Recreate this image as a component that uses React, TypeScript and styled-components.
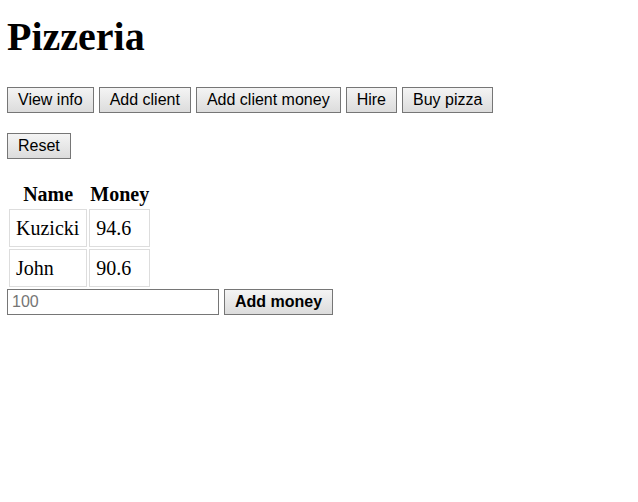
import React from "react";
import styled, { createGlobalStyle } from "styled-components";

const GlobalStyle = createGlobalStyle`
  html, body {
    margin: 0;
    padding: 0;
    background: #ffffff;
    color: #000000;
    font-family: "Liberation Serif", "Times New Roman", serif;
    font-size: 20px;
  }
`;

const Page = styled.div`
  padding: 15px 7px 0;
  display: flex;
  flex-direction: column;
  align-items: flex-start;
`;

const Title = styled.h1`
  margin: 0;
  font-family: "Liberation Serif", "Times New Roman", serif;
  font-size: 40px;
  line-height: 44px;
  font-weight: bold;
`;

const ButtonRow = styled.div<{ $top: number }>`
  display: flex;
  gap: 5px;
  margin-top: ${(p) => p.$top}px;
`;

const Button = styled.button<{ $bold?: boolean }>`
  box-sizing: border-box;
  height: 26px;
  margin: 0;
  padding: 0 10px;
  font-family: "Liberation Sans", Arial, sans-serif;
  font-size: 16px;
  line-height: 18px;
  font-weight: ${(p) => (p.$bold ? "bold" : "normal")};
  color: #000000;
  background: linear-gradient(to bottom, #f4f4f4, #dcdcdc);
  border: 1px solid #767676;
  border-radius: 0;
  cursor: pointer;
`;

const Table = styled.table`
  margin-top: 21px;
  border-collapse: separate;
  border-spacing: 2px;
  font-size: 20px;
`;

const HeadCell = styled.th`
  padding: 1px 1px;
  line-height: 23px;
  font-weight: bold;
  text-align: center;
`;

const Cell = styled.td`
  padding: 6px 7px 6px 6px;
  line-height: 24px;
  border: 1px solid #dddddd;
  text-align: left;
`;

const Form = styled.div`
  display: flex;
  gap: 5px;
`;

const MoneyInput = styled.input`
  box-sizing: border-box;
  width: 212px;
  height: 26px;
  margin: 0;
  padding: 0 4px;
  font-family: "Liberation Sans", Arial, sans-serif;
  font-size: 16px;
  border: 1px solid #767676;
  border-radius: 0;
  outline: none;
  &::placeholder {
    color: #757575;
  }
`;

const clients = [
  { name: "Kuzicki", money: 94.6 },
  { name: "John", money: 90.6 },
];

export default function App() {
  return (
    <>
      <GlobalStyle />
      <Page>
        <Title>Pizzeria</Title>
        <ButtonRow $top={28}>
          <Button>View info</Button>
          <Button>Add client</Button>
          <Button>Add client money</Button>
          <Button>Hire</Button>
          <Button>Buy pizza</Button>
        </ButtonRow>
        <ButtonRow $top={20}>
          <Button>Reset</Button>
        </ButtonRow>
        <Table>
          <thead>
            <tr>
              <HeadCell>Name</HeadCell>
              <HeadCell>Money</HeadCell>
            </tr>
          </thead>
          <tbody>
            {clients.map((c) => (
              <tr key={c.name}>
                <Cell>{c.name}</Cell>
                <Cell>{c.money}</Cell>
              </tr>
            ))}
          </tbody>
        </Table>
        <Form>
          <MoneyInput placeholder="100" />
          <Button $bold>Add money</Button>
        </Form>
      </Page>
    </>
  );
}
